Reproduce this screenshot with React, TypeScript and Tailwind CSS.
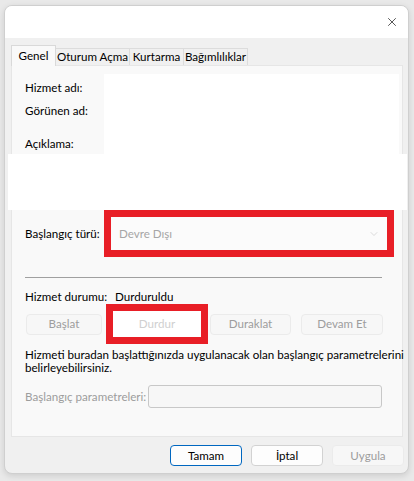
import { X, ChevronDown } from 'lucide-react';

const font = { fontFamily: 'Lato, "Noto Sans", sans-serif' };

function Tab({ label, active, width }: { label: string; active?: boolean; width: string }) {
  if (active) {
    return (
      <div className={`${width} h-[21px] -mb-px z-10 flex items-center justify-center bg-[#f9f9f9] border border-b-0 border-[#d9d9d9] text-black whitespace-nowrap`}>
        {label}
      </div>
    );
  }
  return (
    <div className={`${width} h-[17px] flex items-center justify-center bg-[#f0f0f0] border border-l-0 border-b-0 border-[#dcdcdc] text-black whitespace-nowrap`}>
      {label}
    </div>
  );
}

function Btn({ label, width, disabled, primary }: { label: string; width: string; disabled?: boolean; primary?: boolean }) {
  return (
    <div
      className={`${width} h-[21px] flex items-center justify-center rounded-[4px] border whitespace-nowrap ${
        primary
          ? 'border-[#0067c0] bg-[#fdfdfd] text-black'
          : disabled
          ? 'border-[#ebebeb] bg-[#f7f7f7] text-[#9d9d9d]'
          : 'border-[#d2d2d2] bg-[#fdfdfd] text-black'
      }`}
    >
      {label}
    </div>
  );
}

export default function App() {
  return (
    <div className="w-[414px] h-[481px] bg-[#e9e9e9] pt-[5px] pl-[4px] text-[11.6px] leading-[16px]" style={font}>
      <div className="w-[405px] h-[469px] rounded-[8px] overflow-hidden bg-[#f0f0f0] border border-[#cfcfcf] shadow-[0_2px_6px_rgba(0,0,0,0.12)] flex flex-col">
        {/* title bar */}
        <div className="h-[32px] bg-white flex items-center justify-end pr-[9px]">
          <X className="w-[14px] h-[14px] text-[#222]" strokeWidth={1.3} />
        </div>

        {/* tabs */}
        <div className="pl-[6px] pt-[7px] flex items-end">
          <Tab label="Genel" active width="w-[45px]" />
          <Tab label="Oturum Açma" width="w-[74px]" />
          <Tab label="Kurtarma" width="w-[54px]" />
          <Tab label="Bağımlılıklar" width="w-[64px]" />
        </div>

        {/* panel */}
        <div className="ml-[6px] mr-[5px] h-[372px] bg-[#f9f9f9] border border-[#e6e6e6] flex flex-col whitespace-nowrap">
          <div className="h-[88px] flex pt-[8px]">
            <div className="w-[92px] pl-[13px] flex flex-col text-black">
              <div className="h-[23px] pt-[6px]">Hizmet adı:</div>
              <div className="h-[31px] pt-[6px]">Görünen ad:</div>
              <div className="pt-[8px]">Açıklama:</div>
            </div>
            <div className="flex-1 mr-[3px] bg-white" />
          </div>

          {/* white band */}
          <div className="h-[56px] -ml-[4px] -mr-[5px] bg-white" />

          {/* startup type */}
          <div className="h-[47px] flex items-center">
            <div className="w-[92px] pl-[13px] text-black">Başlangıç türü:</div>
            <div className="w-[290px] h-[47px] border-[7px] border-[#e81e26] bg-white">
              <div className="h-full bg-[#fbfbfb] flex items-center justify-between pl-[8px] pr-[7px] text-[#a6a6a6]">
                <span>Devre Dışı</span>
                <ChevronDown className="w-[12px] h-[12px] text-[#c4c4c4]" strokeWidth={1.2} />
              </div>
            </div>
          </div>

          <div className="mt-[20px] ml-[13px] mr-[20px] h-px bg-[#a0a0a0]" />

          <div className="mt-[11px] pl-[13px] flex text-black">
            <span className="w-[90px]">Hizmet durumu:</span>
            <span>Durduruldu</span>
          </div>

          {/* control buttons */}
          <div className="mt-[-1px] pl-[14px] flex items-center h-[40px]">
            <Btn label="Başlat" width="w-[76px]" disabled />
            <div className="ml-[4px] w-[102px] h-[40px] border-[7px] border-[#e81e26] bg-white flex items-center justify-center text-[#d0d0d0]">
              Durdur
            </div>
            <div className="ml-[2px]">
              <Btn label="Duraklat" width="w-[81px]" disabled />
            </div>
            <div className="ml-[10px]">
              <Btn label="Devam Et" width="w-[82px]" disabled />
            </div>
          </div>

          <div className="mt-[4px] pl-[13px] text-black leading-[13px]">
            <div>Hizmeti buradan başlattığınızda uygulanacak olan başlangıç parametrelerini</div>
            <div>belirleyebilirsiniz.</div>
          </div>

          <div className="mt-[11px] pl-[13px] flex items-center">
            <span className="w-[123px] text-[#9d9d9d]">Başlangıç parametreleri:</span>
            <div className="w-[234px] h-[23px] rounded-[3px] border border-[#c8c8c8] bg-[#f7f7f7]" />
          </div>
        </div>

        {/* footer */}
        <div className="flex justify-end gap-[9px] pr-[4px] pt-[8px]">
          <Btn label="Tamam" width="w-[72px]" primary />
          <Btn label="İptal" width="w-[72px]" />
          <Btn label="Uygula" width="w-[72px]" disabled />
        </div>
      </div>
    </div>
  );
}
